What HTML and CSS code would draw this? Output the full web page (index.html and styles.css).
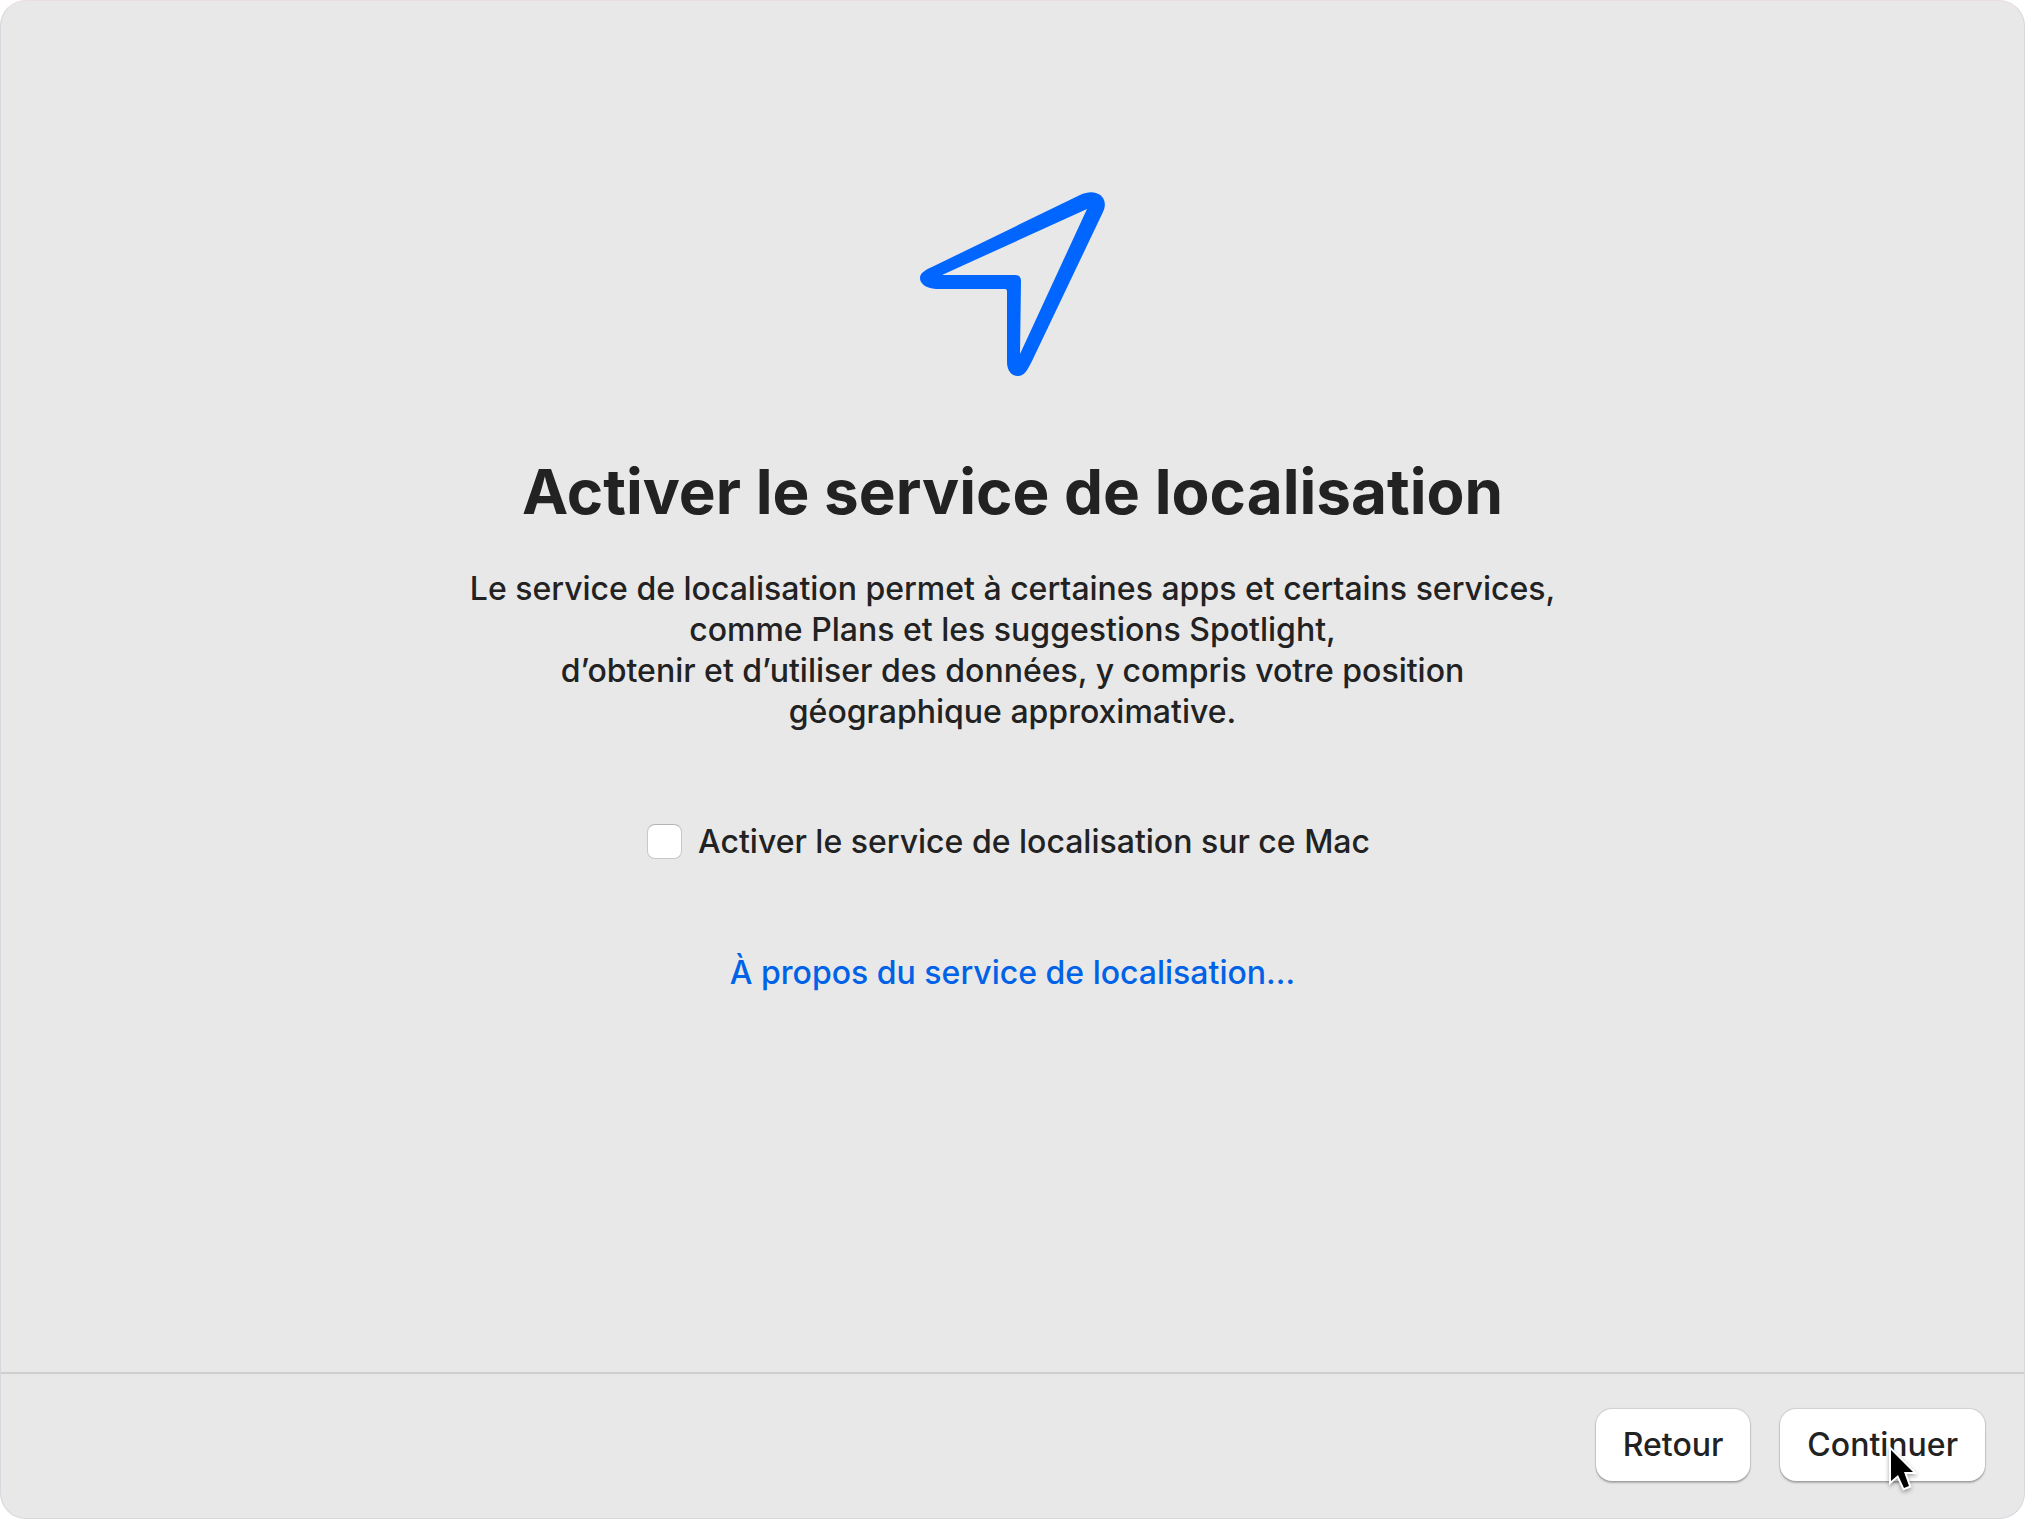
FILE: index.html
```html
<!DOCTYPE html>
<html lang="fr">
<head>
  <meta charset="utf-8">
  <meta name="viewport" content="width=device-width, initial-scale=1">
  <title>Service de localisation</title>
  <link rel="stylesheet" href="styles.css">
</head>
<body>
  <div class="window">
    <main class="content">
      <svg class="location-icon" viewBox="21 22 185 185" aria-hidden="true">
        <path fill-rule="evenodd" d="M35 96 L181 25 C197 17 211 27 204 42 L133 191 C128 201 125 206 119 206 C112 206 108 200 108 192 L108 121 Q108 119 106 119 L37 119 C27 118 21 114 21 108 C21 103 26 100 35 96 Z M43 105 L116 105 Q122 105 122 111 L121 184 L188 39 Z"/>
      </svg>
      <h1 class="title">Activer le service de localisation</h1>
      <p class="description">Le service de localisation permet à certaines apps et certains services,<br>comme Plans et les suggestions Spotlight,<br>d’obtenir et d’utiliser des données, y compris votre position<br>géographique approximative.</p>
      <label class="option">
        <input class="checkbox" type="checkbox">
        <span>Activer le service de localisation sur ce Mac</span>
      </label>
      <a class="about" href="#">À propos du service de localisation…</a>
    </main>
    <footer class="actions">
      <button class="button" type="button">Retour</button>
      <button class="button" type="button">Continuer
        <svg class="pointer" viewBox="0 0 32 48" aria-hidden="true">
          <path d="M3 4 L3 35 L10 29 L16 42 L21 40 L16 26 L25 26 Z"/>
        </svg>
      </button>
    </footer>
  </div>
</body>
</html>
```
FILE: styles.css
```css
* {
  box-sizing: border-box;
}

body {
  margin: 0;
  background: #fff;
  color: #222;
  font-family: Inter, "Liberation Sans", sans-serif;
  font-size: 32px;
  font-weight: 500;
  line-height: 41px;
}

.window {
  display: flex;
  flex-direction: column;
  min-height: 100vh;
  border: 1px solid #d9d6de;
  border-top-color: #e9dde2;
  border-radius: 26px;
  background: #e8e8e8;
}

.content {
  display: flex;
  flex: 1;
  flex-direction: column;
  align-items: center;
  padding: 191px 32px 64px;
  text-align: center;
}

.location-icon {
  width: 185px;
  height: 185px;
  fill: #06f;
}

.title {
  margin: 75px 0 0;
  font-size: 62px;
  font-weight: 700;
  line-height: 80px;
}

.description {
  margin: 36px 0 0;
}

.option {
  display: flex;
  align-items: center;
  gap: 16px;
  margin-top: 89px;
  padding-right: 8px;
}

.checkbox {
  width: 35px;
  height: 35px;
  margin: 0;
  appearance: none;
  border: 1px solid #c8c8c8;
  border-top-color: #b4b4b4;
  border-radius: 8px;
  background: #fff;
}

.checkbox:checked {
  background: #06f;
}

.about {
  margin-top: 90px;
  color: #0062e6;
  text-decoration: none;
}

.actions {
  display: flex;
  justify-content: flex-end;
  gap: 30px;
  padding: 35px 39px 37px;
  border-top: 2px solid #cecece;
}

.button {
  position: relative;
  height: 72px;
  padding: 0 27px 2px;
  border: 0;
  border-radius: 16px;
  background: #fff;
  box-shadow: 0 0 1px 1px rgba(0, 0, 0, 0.1), 0 2px 2px rgba(0, 0, 0, 0.24);
  color: #222;
  font: inherit;
}

.pointer {
  position: absolute;
  top: 37px;
  left: 108px;
  width: 32px;
  height: 48px;
  overflow: visible;
  fill: #000;
  stroke: #fff;
  stroke-width: 4px;
  paint-order: stroke;
  filter: drop-shadow(0 2px 2px rgba(0, 0, 0, 0.35));
}
```
